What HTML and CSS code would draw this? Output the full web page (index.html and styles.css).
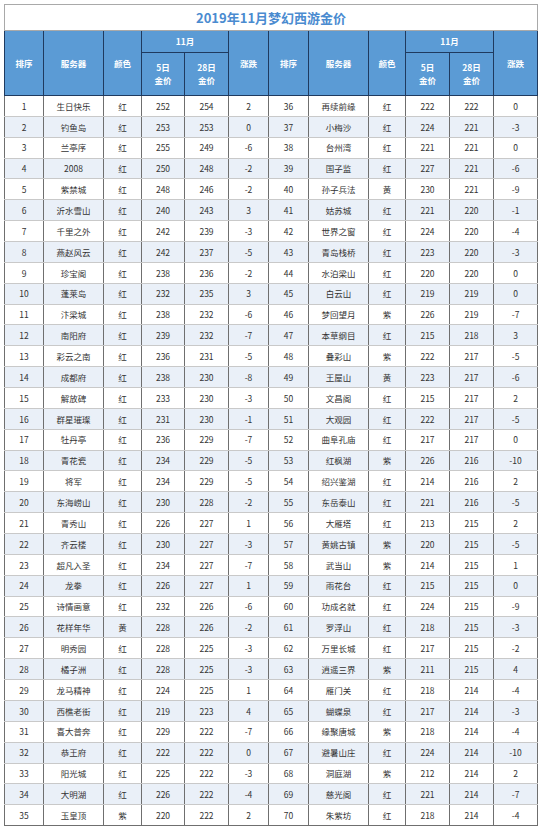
FILE: index.html
```html
<!DOCTYPE html>
<html lang="zh">
<head>
<meta charset="utf-8">
<title>2019年11月梦幻西游金价</title>
<link rel="stylesheet" href="styles.css">
</head>
<body>
<div class="sheet">
<table class="price-table">
<colgroup>
<col class="c-rank"><col class="c-server"><col class="c-color"><col class="c-p5"><col class="c-p28"><col class="c-chg">
<col class="c-rank2"><col class="c-server"><col class="c-color2"><col class="c-p5b"><col class="c-p28"><col class="c-chg2">
</colgroup>
<thead>
<tr class="title-row"><th colspan="12" class="title">2019年11月梦幻西游金价</th></tr>
<tr class="head-1">
<th rowspan="2">排序</th><th rowspan="2">服务器</th><th rowspan="2">颜色</th><th colspan="2">11月</th><th rowspan="2">涨跌</th>
<th rowspan="2">排序</th><th rowspan="2">服务器</th><th rowspan="2">颜色</th><th colspan="2">11月</th><th rowspan="2">涨跌</th>
</tr>
<tr class="head-2">
<th>5日<br>金价</th><th>28日<br>金价</th>
<th>5日<br>金价</th><th>28日<br>金价</th>
</tr>
</thead>
<tbody>
<tr><td>1</td><td>生日快乐</td><td>红</td><td>252</td><td>254</td><td>2</td><td>36</td><td>再续前缘</td><td>红</td><td>222</td><td>222</td><td>0</td></tr>
<tr><td>2</td><td>钓鱼岛</td><td>红</td><td>253</td><td>253</td><td>0</td><td>37</td><td>小梅沙</td><td>红</td><td>224</td><td>221</td><td>-3</td></tr>
<tr><td>3</td><td>兰亭序</td><td>红</td><td>255</td><td>249</td><td>-6</td><td>38</td><td>台州湾</td><td>红</td><td>221</td><td>221</td><td>0</td></tr>
<tr><td>4</td><td>2008</td><td>红</td><td>250</td><td>248</td><td>-2</td><td>39</td><td>国子监</td><td>红</td><td>227</td><td>221</td><td>-6</td></tr>
<tr><td>5</td><td>紫禁城</td><td>红</td><td>248</td><td>246</td><td>-2</td><td>40</td><td>孙子兵法</td><td>黄</td><td>230</td><td>221</td><td>-9</td></tr>
<tr><td>6</td><td>沂水雪山</td><td>红</td><td>240</td><td>243</td><td>3</td><td>41</td><td>姑苏城</td><td>红</td><td>221</td><td>220</td><td>-1</td></tr>
<tr><td>7</td><td>千里之外</td><td>红</td><td>242</td><td>239</td><td>-3</td><td>42</td><td>世界之窗</td><td>红</td><td>224</td><td>220</td><td>-4</td></tr>
<tr><td>8</td><td>燕赵风云</td><td>红</td><td>242</td><td>237</td><td>-5</td><td>43</td><td>青岛栈桥</td><td>红</td><td>223</td><td>220</td><td>-3</td></tr>
<tr><td>9</td><td>珍宝阁</td><td>红</td><td>238</td><td>236</td><td>-2</td><td>44</td><td>水泊梁山</td><td>红</td><td>220</td><td>220</td><td>0</td></tr>
<tr><td>10</td><td>蓬莱岛</td><td>红</td><td>232</td><td>235</td><td>3</td><td>45</td><td>白云山</td><td>红</td><td>219</td><td>219</td><td>0</td></tr>
<tr><td>11</td><td>汴梁城</td><td>红</td><td>238</td><td>232</td><td>-6</td><td>46</td><td>梦回望月</td><td>紫</td><td>226</td><td>219</td><td>-7</td></tr>
<tr><td>12</td><td>南阳府</td><td>红</td><td>239</td><td>232</td><td>-7</td><td>47</td><td>本草纲目</td><td>红</td><td>215</td><td>218</td><td>3</td></tr>
<tr><td>13</td><td>彩云之南</td><td>红</td><td>236</td><td>231</td><td>-5</td><td>48</td><td>叠彩山</td><td>紫</td><td>222</td><td>217</td><td>-5</td></tr>
<tr><td>14</td><td>成都府</td><td>红</td><td>238</td><td>230</td><td>-8</td><td>49</td><td>王屋山</td><td>黄</td><td>223</td><td>217</td><td>-6</td></tr>
<tr><td>15</td><td>解放碑</td><td>红</td><td>233</td><td>230</td><td>-3</td><td>50</td><td>文昌阁</td><td>红</td><td>215</td><td>217</td><td>2</td></tr>
<tr><td>16</td><td>群星璀璨</td><td>红</td><td>231</td><td>230</td><td>-1</td><td>51</td><td>大观园</td><td>红</td><td>222</td><td>217</td><td>-5</td></tr>
<tr><td>17</td><td>牡丹亭</td><td>红</td><td>236</td><td>229</td><td>-7</td><td>52</td><td>曲阜孔庙</td><td>红</td><td>217</td><td>217</td><td>0</td></tr>
<tr><td>18</td><td>青花瓷</td><td>红</td><td>234</td><td>229</td><td>-5</td><td>53</td><td>红枫湖</td><td>紫</td><td>226</td><td>216</td><td>-10</td></tr>
<tr><td>19</td><td>将军</td><td>红</td><td>234</td><td>229</td><td>-5</td><td>54</td><td>绍兴鉴湖</td><td>红</td><td>214</td><td>216</td><td>2</td></tr>
<tr><td>20</td><td>东海崂山</td><td>红</td><td>230</td><td>228</td><td>-2</td><td>55</td><td>东岳泰山</td><td>红</td><td>221</td><td>216</td><td>-5</td></tr>
<tr><td>21</td><td>青秀山</td><td>红</td><td>226</td><td>227</td><td>1</td><td>56</td><td>大雁塔</td><td>红</td><td>213</td><td>215</td><td>2</td></tr>
<tr><td>22</td><td>齐云楼</td><td>红</td><td>230</td><td>227</td><td>-3</td><td>57</td><td>黄姚古镇</td><td>紫</td><td>220</td><td>215</td><td>-5</td></tr>
<tr><td>23</td><td>超凡入圣</td><td>红</td><td>234</td><td>227</td><td>-7</td><td>58</td><td>武当山</td><td>紫</td><td>214</td><td>215</td><td>1</td></tr>
<tr><td>24</td><td>龙拳</td><td>红</td><td>226</td><td>227</td><td>1</td><td>59</td><td>雨花台</td><td>红</td><td>215</td><td>215</td><td>0</td></tr>
<tr><td>25</td><td>诗情画意</td><td>红</td><td>232</td><td>226</td><td>-6</td><td>60</td><td>功成名就</td><td>红</td><td>224</td><td>215</td><td>-9</td></tr>
<tr><td>26</td><td>花样年华</td><td>黄</td><td>228</td><td>226</td><td>-2</td><td>61</td><td>罗浮山</td><td>红</td><td>218</td><td>215</td><td>-3</td></tr>
<tr><td>27</td><td>明秀园</td><td>红</td><td>228</td><td>225</td><td>-3</td><td>62</td><td>万里长城</td><td>红</td><td>217</td><td>215</td><td>-2</td></tr>
<tr><td>28</td><td>橘子洲</td><td>红</td><td>228</td><td>225</td><td>-3</td><td>63</td><td>逍遥三界</td><td>紫</td><td>211</td><td>215</td><td>4</td></tr>
<tr><td>29</td><td>龙马精神</td><td>红</td><td>224</td><td>225</td><td>1</td><td>64</td><td>雁门关</td><td>红</td><td>218</td><td>214</td><td>-4</td></tr>
<tr><td>30</td><td>西樵老街</td><td>红</td><td>219</td><td>223</td><td>4</td><td>65</td><td>蝴蝶泉</td><td>红</td><td>217</td><td>214</td><td>-3</td></tr>
<tr><td>31</td><td>喜大普奔</td><td>红</td><td>229</td><td>222</td><td>-7</td><td>66</td><td>缘聚唐城</td><td>紫</td><td>218</td><td>214</td><td>-4</td></tr>
<tr><td>32</td><td>恭王府</td><td>红</td><td>222</td><td>222</td><td>0</td><td>67</td><td>避暑山庄</td><td>红</td><td>224</td><td>214</td><td>-10</td></tr>
<tr><td>33</td><td>阳光城</td><td>红</td><td>225</td><td>222</td><td>-3</td><td>68</td><td>洞庭湖</td><td>紫</td><td>212</td><td>214</td><td>2</td></tr>
<tr><td>34</td><td>大明湖</td><td>红</td><td>226</td><td>222</td><td>-4</td><td>69</td><td>慈光阁</td><td>红</td><td>221</td><td>214</td><td>-7</td></tr>
<tr><td>35</td><td>玉皇顶</td><td>紫</td><td>220</td><td>222</td><td>2</td><td>70</td><td>朱紫坊</td><td>红</td><td>218</td><td>214</td><td>-4</td></tr>
</tbody>
</table>
</div>
</body>
</html>
```

FILE: styles.css
```css
html, body {
  margin: 0;
  padding: 0;
  background: #ffffff;
}

body {
  font-family: "Noto Sans CJK SC", "Noto Sans", sans-serif;
}

.sheet {
  padding: 4px 0 0 4px;
}

.price-table {
  border-collapse: collapse;
  table-layout: fixed;
  width: 533px;
}

.c-rank { width: 39px; }
.c-server { width: 60px; }
.c-color { width: 38px; }
.c-p5 { width: 43px; }
.c-p28 { width: 44px; }
.c-chg { width: 40px; }
.c-rank2 { width: 40px; }
.c-color2 { width: 37px; }
.c-p5b { width: 44px; }
.c-chg2 { width: 44px; }

.price-table th,
.price-table td {
  padding: 0;
  text-align: center;
  vertical-align: middle;
  white-space: nowrap;
  overflow: hidden;
}

.title-row .title {
  height: 25px;
  border: 1px solid #a9a9a9;
  background: #ffffff;
  color: #4a8bd0;
  font-size: 13px;
  font-weight: bold;
  line-height: 1;
}

.head-1 th,
.head-2 th {
  background: #5b9bd5;
  color: #ffffff;
  font-size: 8.5px;
  font-weight: bold;
  line-height: 13px;
  border: 1px solid #1f3a5f;
}

.head-1 th {
  height: 21px;
}

.head-2 th {
  height: 42px;
}

.price-table tbody td {
  height: 19.86px;
  font-size: 8.5px;
  color: #333333;
  line-height: 1;
  border-top: 1px solid #c9c9c9;
  border-bottom: 1px solid #c9c9c9;
  border-left: 1px solid #6f6f6f;
  border-right: 1px solid #6f6f6f;
  background: #ffffff;
}

.price-table tbody tr:nth-child(even) td {
  background: #eaf0f8;
}

.price-table tbody tr:last-child td {
  border-bottom: 1px solid #6f6f6f;
}
```
